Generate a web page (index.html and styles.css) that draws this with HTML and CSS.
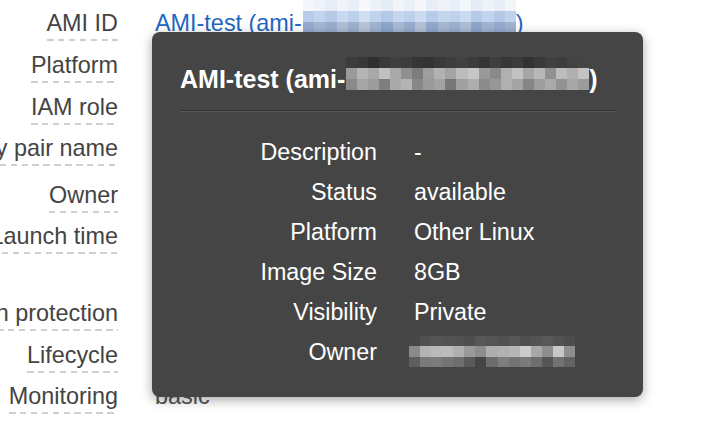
FILE: index.html
```html
<!DOCTYPE html>
<html lang="en">
<head>
<meta charset="utf-8">
<title>Instance details</title>
<link rel="stylesheet" href="styles.css">
</head>
<body>
<main class="details">
  <div class="row">
    <div class="label"><span>AMI ID</span></div>
    <div class="value"><a class="link" href="#">AMI-test (ami-<svg class="mosaic mosaic-link" viewBox="0 0 19 3" preserveAspectRatio="none" shape-rendering="crispEdges">
      <g>
        <rect x="0" y="0" width="1" height="1" fill="#f4f7fb"/><rect x="1" y="0" width="1" height="1" fill="#eef3f9"/><rect x="2" y="0" width="1" height="1" fill="#e6edf7"/><rect x="3" y="0" width="1" height="1" fill="#f0f4fa"/><rect x="4" y="0" width="1" height="1" fill="#e9eff8"/><rect x="5" y="0" width="1" height="1" fill="#f6f8fc"/><rect x="6" y="0" width="1" height="1" fill="#edf2f9"/><rect x="7" y="0" width="1" height="1" fill="#e4ecf6"/><rect x="8" y="0" width="1" height="1" fill="#f1f5fa"/><rect x="9" y="0" width="1" height="1" fill="#eaf0f8"/><rect x="10" y="0" width="1" height="1" fill="#f5f7fb"/><rect x="11" y="0" width="1" height="1" fill="#e7eef7"/><rect x="12" y="0" width="1" height="1" fill="#eff3f9"/><rect x="13" y="0" width="1" height="1" fill="#e9eff8"/><rect x="14" y="0" width="1" height="1" fill="#f3f6fb"/><rect x="15" y="0" width="1" height="1" fill="#e5ecf6"/><rect x="16" y="0" width="1" height="1" fill="#eef3f9"/><rect x="17" y="0" width="1" height="1" fill="#e8eef7"/><rect x="18" y="0" width="1" height="1" fill="#f2f5fa"/>
        <rect x="0" y="1" width="1" height="1" fill="#b9cdea"/><rect x="1" y="1" width="1" height="1" fill="#c3d5ee"/><rect x="2" y="1" width="1" height="1" fill="#b6cae8"/><rect x="3" y="1" width="1" height="1" fill="#c8d8ef"/><rect x="4" y="1" width="1" height="1" fill="#bcd0eb"/><rect x="5" y="1" width="1" height="1" fill="#d0def2"/><rect x="6" y="1" width="1" height="1" fill="#c0d3ed"/><rect x="7" y="1" width="1" height="1" fill="#b4c9e8"/><rect x="8" y="1" width="1" height="1" fill="#c6d6ee"/><rect x="9" y="1" width="1" height="1" fill="#bccfeb"/><rect x="10" y="1" width="1" height="1" fill="#cddbf1"/><rect x="11" y="1" width="1" height="1" fill="#b8ccea"/><rect x="12" y="1" width="1" height="1" fill="#c4d5ee"/><rect x="13" y="1" width="1" height="1" fill="#bfd1ec"/><rect x="14" y="1" width="1" height="1" fill="#cadaf0"/><rect x="15" y="1" width="1" height="1" fill="#b7cbe9"/><rect x="16" y="1" width="1" height="1" fill="#c2d4ed"/><rect x="17" y="1" width="1" height="1" fill="#b5c9e7"/><rect x="18" y="1" width="1" height="1" fill="#c0d2ec"/>
        <rect x="0" y="2" width="1" height="1" fill="#97acd0"/><rect x="1" y="2" width="1" height="1" fill="#a4b6d4"/><rect x="2" y="2" width="1" height="1" fill="#9aafcf"/><rect x="3" y="2" width="1" height="1" fill="#b0bfd6"/><rect x="4" y="2" width="1" height="1" fill="#9db1d0"/><rect x="5" y="2" width="1" height="1" fill="#b8c4d8"/><rect x="6" y="2" width="1" height="1" fill="#a0b3d1"/><rect x="7" y="2" width="1" height="1" fill="#8ea6cc"/><rect x="8" y="2" width="1" height="1" fill="#a8b9d5"/><rect x="9" y="2" width="1" height="1" fill="#98adcf"/><rect x="10" y="2" width="1" height="1" fill="#b4c2d7"/><rect x="11" y="2" width="1" height="1" fill="#93a9ce"/><rect x="12" y="2" width="1" height="1" fill="#a6b7d4"/><rect x="13" y="2" width="1" height="1" fill="#9cb0d0"/><rect x="14" y="2" width="1" height="1" fill="#adbdd6"/><rect x="15" y="2" width="1" height="1" fill="#90a7cd"/><rect x="16" y="2" width="1" height="1" fill="#a2b4d2"/><rect x="17" y="2" width="1" height="1" fill="#95abcf"/><rect x="18" y="2" width="1" height="1" fill="#a0b3d1"/>
      </g>
    </svg>)</a></div>
  </div>
  <div class="row">
    <div class="label"><span>Platform</span></div>
    <div class="value"></div>
  </div>
  <div class="row">
    <div class="label"><span>IAM role</span></div>
    <div class="value"></div>
  </div>
  <div class="row row-tall-s">
    <div class="label"><span>Key pair name</span></div>
    <div class="value"></div>
  </div>
  <div class="row">
    <div class="label"><span>Owner</span></div>
    <div class="value"></div>
  </div>
  <div class="row row-tall-l">
    <div class="label"><span>Launch time</span></div>
    <div class="value"></div>
  </div>
  <div class="row">
    <div class="label"><span>Termination protection</span></div>
    <div class="value"></div>
  </div>
  <div class="row">
    <div class="label"><span>Lifecycle</span></div>
    <div class="value"></div>
  </div>
  <div class="row">
    <div class="label"><span>Monitoring</span></div>
    <div class="value plain">basic</div>
  </div>
</main>

<div class="tooltip" role="tooltip">
  <div class="tip-title">AMI-test (ami-<svg class="mosaic mosaic-title" viewBox="0 0 22 3" preserveAspectRatio="none" shape-rendering="crispEdges">
    <g>
      <rect x="0" y="0" width="1" height="1" fill="#3c3c3c"/><rect x="1" y="0" width="1" height="1" fill="#383838"/><rect x="2" y="0" width="1" height="1" fill="#2f2f2f"/><rect x="3" y="0" width="1" height="1" fill="#3a3a3a"/><rect x="4" y="0" width="1" height="1" fill="#404040"/><rect x="5" y="0" width="1" height="1" fill="#3d3d3d"/><rect x="6" y="0" width="1" height="1" fill="#363636"/><rect x="7" y="0" width="1" height="1" fill="#333333"/><rect x="8" y="0" width="1" height="1" fill="#393939"/><rect x="9" y="0" width="1" height="1" fill="#3e3e3e"/><rect x="10" y="0" width="1" height="1" fill="#414141"/><rect x="11" y="0" width="1" height="1" fill="#3b3b3b"/><rect x="12" y="0" width="1" height="1" fill="#353535"/><rect x="13" y="0" width="1" height="1" fill="#3f3f3f"/><rect x="14" y="0" width="1" height="1" fill="#373737"/><rect x="15" y="0" width="1" height="1" fill="#3c3c3c"/><rect x="16" y="0" width="1" height="1" fill="#323232"/><rect x="17" y="0" width="1" height="1" fill="#3a3a3a"/><rect x="18" y="0" width="1" height="1" fill="#404040"/><rect x="19" y="0" width="1" height="1" fill="#3d3d3d"/><rect x="20" y="0" width="1" height="1" fill="#434343"/><rect x="21" y="0" width="1" height="1" fill="#454545"/>
      <rect x="0" y="1" width="1" height="1" fill="#9a9a9a"/><rect x="1" y="1" width="1" height="1" fill="#b5b5b5"/><rect x="2" y="1" width="1" height="1" fill="#a8a8a8"/><rect x="3" y="1" width="1" height="1" fill="#c0c0c0"/><rect x="4" y="1" width="1" height="1" fill="#aaaaaa"/><rect x="5" y="1" width="1" height="1" fill="#8f8f8f"/><rect x="6" y="1" width="1" height="1" fill="#7c7c7c"/><rect x="7" y="1" width="1" height="1" fill="#9e9e9e"/><rect x="8" y="1" width="1" height="1" fill="#b2b2b2"/><rect x="9" y="1" width="1" height="1" fill="#a4a4a4"/><rect x="10" y="1" width="1" height="1" fill="#bcbcbc"/><rect x="11" y="1" width="1" height="1" fill="#c6c6c6"/><rect x="12" y="1" width="1" height="1" fill="#999999"/><rect x="13" y="1" width="1" height="1" fill="#8a8a8a"/><rect x="14" y="1" width="1" height="1" fill="#b0b0b0"/><rect x="15" y="1" width="1" height="1" fill="#c2c2c2"/><rect x="16" y="1" width="1" height="1" fill="#a6a6a6"/><rect x="17" y="1" width="1" height="1" fill="#b8b8b8"/><rect x="18" y="1" width="1" height="1" fill="#919191"/><rect x="19" y="1" width="1" height="1" fill="#bdbdbd"/><rect x="20" y="1" width="1" height="1" fill="#afafaf"/><rect x="21" y="1" width="1" height="1" fill="#c4c4c4"/>
      <rect x="0" y="2" width="1" height="1" fill="#8a8a8a"/><rect x="1" y="2" width="1" height="1" fill="#a5a5a5"/><rect x="2" y="2" width="1" height="1" fill="#9c9c9c"/><rect x="3" y="2" width="1" height="1" fill="#7e7e7e"/><rect x="4" y="2" width="1" height="1" fill="#a9a9a9"/><rect x="5" y="2" width="1" height="1" fill="#b3b3b3"/><rect x="6" y="2" width="1" height="1" fill="#888888"/><rect x="7" y="2" width="1" height="1" fill="#9a9a9a"/><rect x="8" y="2" width="1" height="1" fill="#a2a2a2"/><rect x="9" y="2" width="1" height="1" fill="#777777"/><rect x="10" y="2" width="1" height="1" fill="#a0a0a0"/><rect x="11" y="2" width="1" height="1" fill="#aeaeae"/><rect x="12" y="2" width="1" height="1" fill="#8c8c8c"/><rect x="13" y="2" width="1" height="1" fill="#979797"/><rect x="14" y="2" width="1" height="1" fill="#b0b0b0"/><rect x="15" y="2" width="1" height="1" fill="#a4a4a4"/><rect x="16" y="2" width="1" height="1" fill="#858585"/><rect x="17" y="2" width="1" height="1" fill="#9e9e9e"/><rect x="18" y="2" width="1" height="1" fill="#aaaaaa"/><rect x="19" y="2" width="1" height="1" fill="#939393"/><rect x="20" y="2" width="1" height="1" fill="#a7a7a7"/><rect x="21" y="2" width="1" height="1" fill="#9b9b9b"/>
    </g>
  </svg>)</div>
  <div class="tip-divider"></div>
  <dl class="tip-grid">
    <dt>Description</dt><dd>-</dd>
    <dt>Status</dt><dd>available</dd>
    <dt>Platform</dt><dd>Other Linux</dd>
    <dt>Image Size</dt><dd>8GB</dd>
    <dt>Visibility</dt><dd>Private</dd>
    <dt>Owner</dt><dd><svg class="mosaic mosaic-owner" viewBox="0 0 15 3" preserveAspectRatio="none" shape-rendering="crispEdges">
      <g>
        <rect x="0" y="0" width="1" height="1" fill="#474747"/><rect x="1" y="0" width="1" height="1" fill="#505050"/><rect x="2" y="0" width="1" height="1" fill="#555555"/><rect x="3" y="0" width="1" height="1" fill="#535353"/><rect x="4" y="0" width="1" height="1" fill="#525252"/><rect x="5" y="0" width="1" height="1" fill="#4e4e4e"/><rect x="6" y="0" width="1" height="1" fill="#575757"/><rect x="7" y="0" width="1" height="1" fill="#545454"/><rect x="8" y="0" width="1" height="1" fill="#515151"/><rect x="9" y="0" width="1" height="1" fill="#565656"/><rect x="10" y="0" width="1" height="1" fill="#4f4f4f"/><rect x="11" y="0" width="1" height="1" fill="#535353"/><rect x="12" y="0" width="1" height="1" fill="#585858"/><rect x="13" y="0" width="1" height="1" fill="#525252"/><rect x="14" y="0" width="1" height="1" fill="#4d4d4d"/>
        <rect x="0" y="1" width="1" height="1" fill="#8a8a8a"/><rect x="1" y="1" width="1" height="1" fill="#b4b4b4"/><rect x="2" y="1" width="1" height="1" fill="#bababa"/><rect x="3" y="1" width="1" height="1" fill="#bdbdbd"/><rect x="4" y="1" width="1" height="1" fill="#b0b0b0"/><rect x="5" y="1" width="1" height="1" fill="#9a9a9a"/><rect x="6" y="1" width="1" height="1" fill="#8d8d8d"/><rect x="7" y="1" width="1" height="1" fill="#adadad"/><rect x="8" y="1" width="1" height="1" fill="#b1b1b1"/><rect x="9" y="1" width="1" height="1" fill="#b6b6b6"/><rect x="10" y="1" width="1" height="1" fill="#cdcdcd"/><rect x="11" y="1" width="1" height="1" fill="#a8a8a8"/><rect x="12" y="1" width="1" height="1" fill="#8e8e8e"/><rect x="13" y="1" width="1" height="1" fill="#c8c8c8"/><rect x="14" y="1" width="1" height="1" fill="#8f8f8f"/>
        <rect x="0" y="2" width="1" height="1" fill="#5e5e5e"/><rect x="1" y="2" width="1" height="1" fill="#7a7a7a"/><rect x="2" y="2" width="1" height="1" fill="#7c7c7c"/><rect x="3" y="2" width="1" height="1" fill="#747474"/><rect x="4" y="2" width="1" height="1" fill="#6e6e6e"/><rect x="5" y="2" width="1" height="1" fill="#5a5a5a"/><rect x="6" y="2" width="1" height="1" fill="#464646"/><rect x="7" y="2" width="1" height="1" fill="#6c6c6c"/><rect x="8" y="2" width="1" height="1" fill="#7e7e7e"/><rect x="9" y="2" width="1" height="1" fill="#747474"/><rect x="10" y="2" width="1" height="1" fill="#7a7a7a"/><rect x="11" y="2" width="1" height="1" fill="#6e6e6e"/><rect x="12" y="2" width="1" height="1" fill="#565656"/><rect x="13" y="2" width="1" height="1" fill="#727272"/><rect x="14" y="2" width="1" height="1" fill="#636363"/>
      </g>
    </svg></dd>
  </dl>
</div>
</body>
</html>
```

FILE: styles.css
```css
html, body {
  margin: 0;
  padding: 0;
  background: #ffffff;
}

body {
  font-family: "Liberation Sans", Helvetica, Arial, sans-serif;
  overflow: hidden;
  width: 708px;
  height: 422px;
  position: relative;
}

/* ---------- background details list ---------- */
.details {
  padding-top: 10.2px;
  font-size: 23.4px;
  line-height: 26px;
  color: #444444;
}

.row {
  display: flex;
  align-items: baseline;
  margin-bottom: 10.67px;
}

.row-tall-s {
  margin-bottom: 15.67px;
}

.row-tall-l {
  margin-bottom: 45.67px;
}

.label {
  flex: none;
  width: 118px;
  display: flex;
  justify-content: flex-end;
}

.label span {
  flex: none;
  white-space: nowrap;
  padding-bottom: 3px;
  border-bottom: 2px solid transparent;
  background-image: repeating-linear-gradient(90deg, #cfcfcf 0 6.5px, transparent 6.5px 10.9px);
  background-repeat: no-repeat;
  background-position: left bottom;
  background-size: 100% 2px;
  background-origin: border-box;
  background-clip: border-box;
}

.value {
  margin-left: 37px;
  white-space: nowrap;
}

.value.plain {
  color: #555555;
}

.link {
  color: #2366c2;
  text-decoration: none;
}

.mosaic {
  display: inline-block;
}

.mosaic-link {
  width: 213px;
  height: 33px;
  margin-left: 1px;
  margin-top: -14px;
  vertical-align: -2px;
}

/* ---------- tooltip ---------- */
.tooltip {
  position: absolute;
  left: 152px;
  top: 32px;
  width: 491px;
  box-sizing: border-box;
  padding: 33px 27px 25px 28px;
  background: #454545;
  border-radius: 8px;
  box-shadow: 0 3px 12px rgba(0, 0, 0, 0.35);
  color: #ffffff;
}

.tip-title {
  font-size: 25px;
  font-weight: bold;
  line-height: 28px;
  white-space: nowrap;
}

.mosaic-title {
  width: 243px;
  height: 33px;
  margin-left: 1px;
  margin-top: -14px;
  vertical-align: -2px;
}

.tip-divider {
  margin-top: 17px;
  height: 0;
  border-top: 1px solid #343434;
  border-bottom: 1px solid #575757;
}

.tip-grid {
  display: grid;
  grid-template-columns: 197px 1fr;
  column-gap: 37px;
  margin: 20px 0 0;
  font-size: 23.3px;
  line-height: 40px;
}

.tip-grid dt {
  text-align: right;
  white-space: nowrap;
}

.tip-grid dd {
  margin: 0;
  white-space: nowrap;
}

.mosaic-owner {
  width: 166px;
  height: 31px;
  margin-left: -5px;
  margin-top: -12px;
  vertical-align: -7px;
}
```
